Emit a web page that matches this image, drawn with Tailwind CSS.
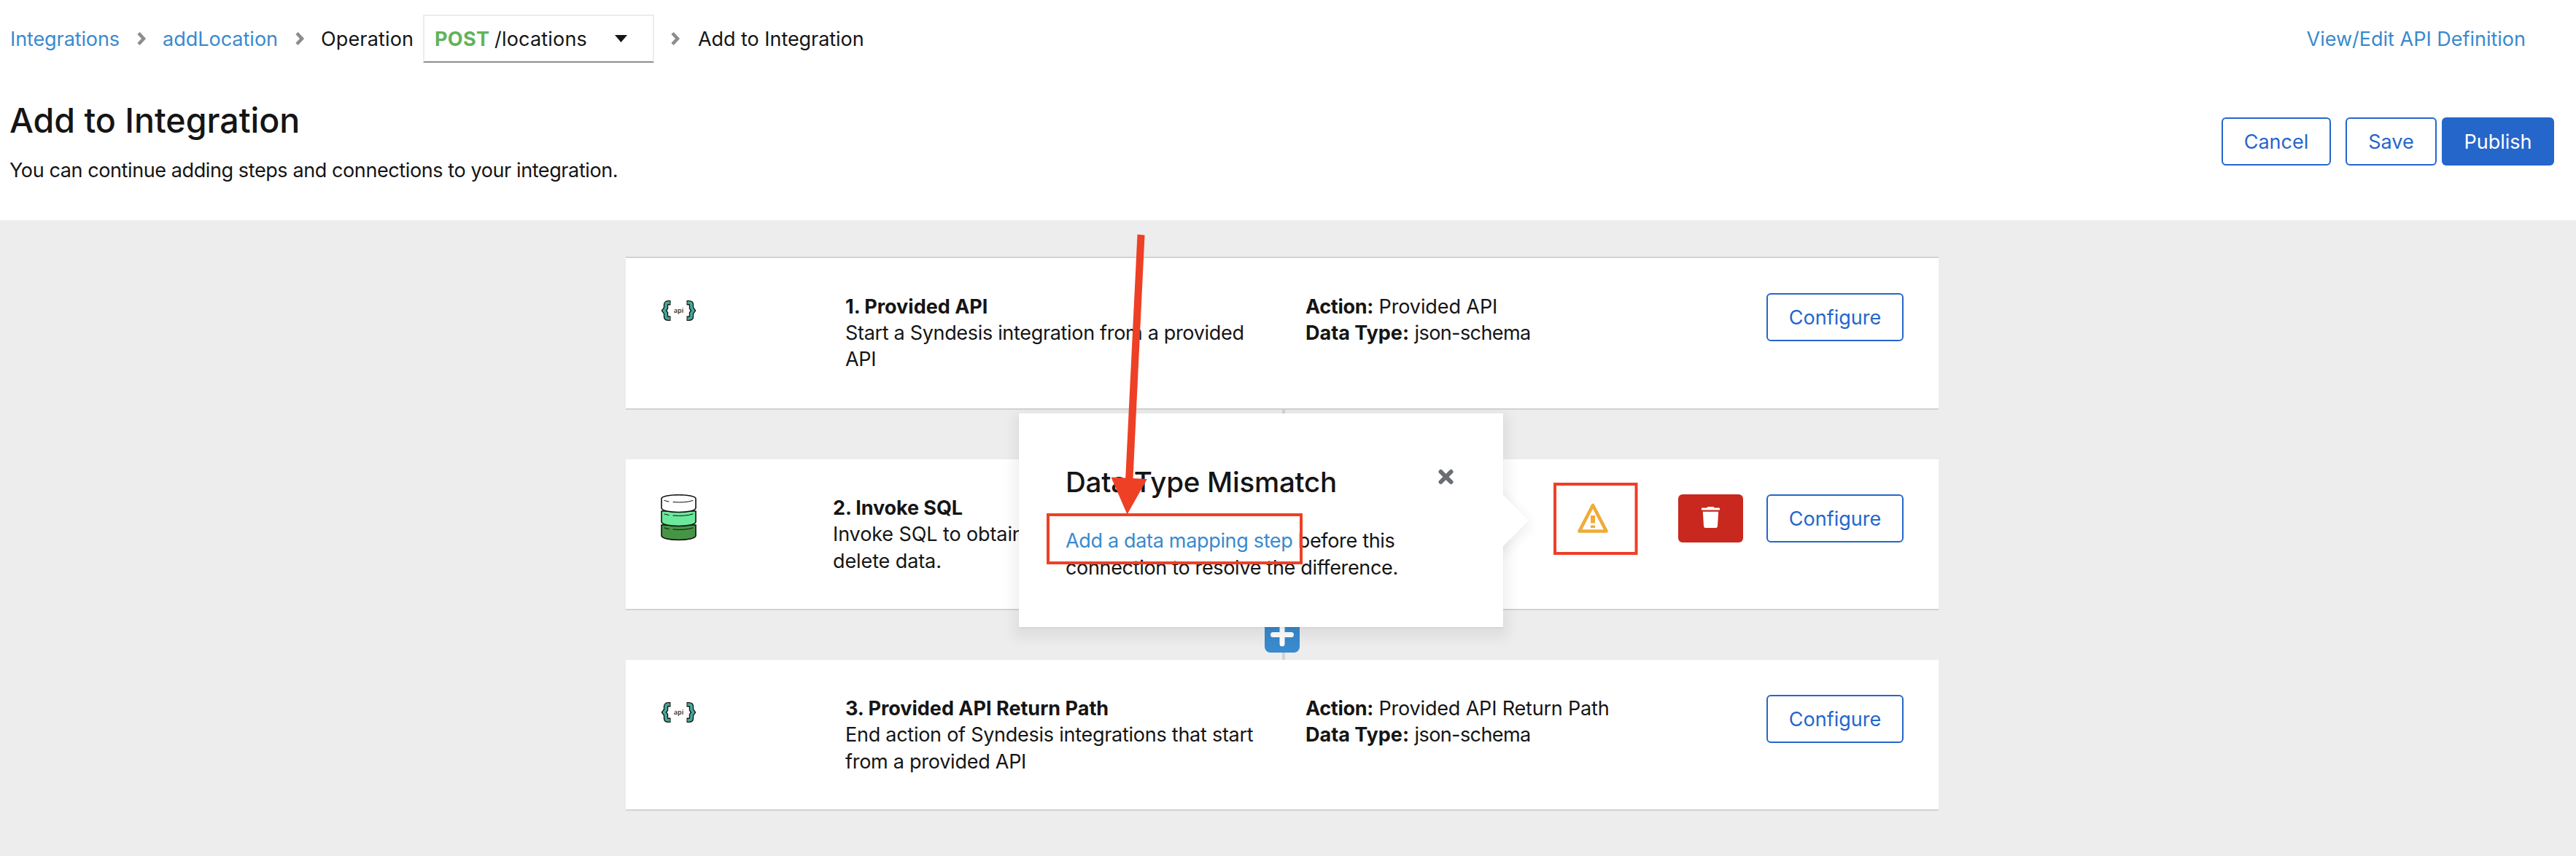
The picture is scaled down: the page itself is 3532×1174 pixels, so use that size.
<!DOCTYPE html>
<html lang="en">
<head>
<meta charset="utf-8">
<title>Add to Integration</title>
<script src="https://cdn.jsdelivr.net/npm/@tailwindcss/browser@4"></script>
</head>
<body class="relative flex h-[1174px] w-[3532px] flex-col overflow-hidden bg-[#ededed] font-['Inter',sans-serif] text-[27px] leading-[36px] text-[#151515]">

<header class="flex h-[302px] shrink-0 flex-col bg-white">
  <nav class="flex items-center pt-5 pl-[14px] pr-[69px] whitespace-nowrap">
    <a class="w-[151px] pt-0.5 tracking-[-0.1px] text-[#398ace]">Integrations</a>
    <svg class="ml-[22px] w-3.5 h-[18px]" viewBox="0 0 14 18" fill="none" stroke="#8a8d90" stroke-width="4.500"><path d="M3 1.5 10 9 3 16.500"/></svg>
    <a class="ml-[22px] w-[160px] pt-0.5 text-[#398ace]">addLocation</a>
    <svg class="ml-[21px] w-3.5 h-[18px]" viewBox="0 0 14 18" fill="none" stroke="#8a8d90" stroke-width="4.500"><path d="M3 1.5 10 9 3 16.500"/></svg>
    <span class="ml-[22px] w-[140px] pt-0.5 tracking-[0.15px]">Operation</span>
    <div class="flex h-[66px] w-[317px] items-center border-2 border-[#ececec] border-b-[#8a8d90] pl-3.5">
      <span class="w-[82px] pt-0.5 font-bold text-[#62b35a] tracking-[0.3px]">POST</span>
      <span class="w-[165px] pt-0.5 tracking-[0.2px]">/locations</span>
      <svg class="h-2.5 w-[17px]" viewBox="0 0 17 10"><path d="M0 0H17L8.500 10Z" fill="#151515"/></svg>
    </div>
    <svg class="ml-[22px] w-3.5 h-[18px]" viewBox="0 0 14 18" fill="none" stroke="#8a8d90" stroke-width="4.500"><path d="M3 1.5 10 9 3 16.500"/></svg>
    <span class="ml-6 pt-0.5 tracking-[-0.05px]">Add to Integration</span>
    <a class="ml-auto pt-0.5 text-[#398ace]">View/Edit API Definition</a>
  </nav>
  <div class="flex justify-between pl-[13px] pr-[30px]">
    <div class="pt-[49px]">
      <h1 class="text-[46.500px] leading-[60px] font-medium">Add to Integration</h1>
      <p class="mt-[21px] whitespace-nowrap tracking-[-0.4px]">You can continue adding steps and connections to your integration.</p>
    </div>
    <div class="flex pt-[75px]">
      <button class="h-[66px] w-[150px] rounded-md border-2 border-[#2566cb] pt-0.5 text-[#2566cb]">Cancel</button>
      <button class="ml-5 h-[66px] w-[125px] rounded-md border-2 border-[#2566cb] pt-0.5 text-[#2566cb]">Save</button>
      <button class="ml-[7px] h-[66px] w-[154px] rounded-md bg-[#2566cb] pt-0.5 text-white">Publish</button>
    </div>
  </div>
</header>

<main class="flex flex-col pt-[50px] pl-[858px]">
  <section class="grid h-[210px] w-[1800px] grid-cols-[253px_631px_1fr_auto] items-start border-y-2 border-[#d2d2d2] bg-white px-12 pt-12">
    <svg class="mt-[9px] h-[30px] w-[50px]" viewBox="0 0 50 30">
      <g fill="none">
        <g stroke="#151515" stroke-width="6.400"><path d="M13.500 4.200H10.500Q7 4.200 7 7V11.500L4.500 15L7 18.500V23Q7 25.800 10.500 25.800H13.500"/><path d="M35.500 4.200H38.500Q42 4.200 42 7V11.500L44.500 15L42 18.500V23Q42 25.800 38.500 25.800H35.500"/></g>
        <g stroke="#47a89a" stroke-width="3.700"><path d="M12.500 4.200H10.500Q7 4.200 7 7V11.500L4.500 15L7 18.500V23Q7 25.800 10.500 25.800H12.500"/><path d="M36.500 4.200H38.500Q42 4.200 42 7V11.500L44.500 15L42 18.500V23Q42 25.800 38.500 25.800H36.500"/></g>
      </g>
      <text x="24.500" y="18" text-anchor="middle" font-family="Noto Sans" font-weight="600" font-size="9" fill="#333">api</text>
    </svg>
    <div class="w-[580px] pt-px"><h2 class="font-bold">1. Provided API</h2><p class="tracking-[-0.32px]">Start a Syndesis integration from a provided API</p></div>
    <div class="whitespace-nowrap pt-px"><p><b class="tracking-[-0.3px]">Action:</b> <span class="tracking-[-0.1px]">Provided API</span></p><p><b>Data Type:</b> <span class="tracking-[-0.6px]">json-schema</span></p></div>
    <button class="h-[66px] w-[188px] rounded-md border-2 border-[#2566cb] pt-0.5 text-[#2566cb]">Configure</button>
  </section>
  <div class="flex h-[68px] w-[1800px] justify-center"><div class="ml-1 w-1 bg-[#d2d2d2]"></div></div>

  <section class="grid h-[207px] w-[1800px] grid-cols-[236px_1fr_auto] items-start border-b-2 border-[#d2d2d2] bg-white px-12 pt-12">
    <svg class="h-[64px] w-[49px]" viewBox="0 0 49 64" stroke="#101010" stroke-width="1.600" stroke-linecap="round" fill="none">
      <path d="M1 42V56.500C1 64.500 48 64.500 48 56.500V42Z" fill="#459545"/>
      <path d="M1 23V37.500C1 45.500 48 45.500 48 37.500V23Z" fill="#6ce89c"/>
      <path d="M1 6C1-1 48-1 48 6V18.500C48 26.500 1 26.500 1 18.500Z" fill="#fff"/>
      <path d="M5 8.500 11 10M17 10.500Q33 12 44 8.500M5 27 11 28.500M17 29Q33 30.500 44 27M5 46 11 47.500M17 48Q33 49.500 44 46" stroke-width="1"/>
    </svg>
    <div class="w-[560px] pt-px"><h2 class="font-bold tracking-[-0.1px]">2. Invoke SQL</h2><p class="leading-[36.500px] tracking-[-0.1px]">Invoke SQL to obtain, store, update, or delete data.</p></div>
    <div class="flex">
      <svg class="mt-3 mr-[96px] h-[42px] w-[42px]" viewBox="0 0 42 42"><path d="M21 3 2.500 38.500H39.500Z" fill="none" stroke="#f0ab37" stroke-width="4.600" stroke-linejoin="round"/><path d="M18 17h6v10.500h-6ZM18 30.500h6v3.500h-6Z" fill="#f0ab37"/></svg>
      <button class="grid h-[66px] w-[89px] place-items-center rounded-md bg-[#c9281e]"><svg class="mb-1 h-[29px] w-[25px]" viewBox="0 0 25 29" fill="#fff"><path d="M8.500 0h8l1 1.500H24q1 0 1 1V4.500H0V2.500q0-1 1-1H7.500ZM1.800 6.800H23.200L22 26.500Q21.800 29 19.500 29H5.500Q3.200 29 3 26.500Z"/></svg></button>
      <button class="ml-8 h-[66px] w-[188px] rounded-md border-2 border-[#2566cb] pt-0.5 text-[#2566cb]">Configure</button>
    </div>
  </section>
  <div class="relative flex h-[68px] w-[1800px] justify-center"><div class="ml-1 w-1 bg-[#d2d2d2]"></div>
    <svg class="absolute top-2.5 left-[876px] h-12 w-12" viewBox="0 0 48 48"><rect width="48" height="48" rx="8" fill="#398ace"/><path d="M24 11V36M11.500 23.500H36.500" stroke="#fff" stroke-width="7" stroke-linecap="round"/></svg>
  </div>

  <section class="grid h-[207px] w-[1800px] grid-cols-[253px_631px_1fr_auto] items-start border-b-2 border-[#d2d2d2] bg-white px-12 pt-12">
    <svg class="mt-[9px] h-[30px] w-[50px]" viewBox="0 0 50 30">
      <g fill="none">
        <g stroke="#151515" stroke-width="6.400"><path d="M13.500 4.200H10.500Q7 4.200 7 7V11.500L4.500 15L7 18.500V23Q7 25.800 10.500 25.800H13.500"/><path d="M35.500 4.200H38.500Q42 4.200 42 7V11.500L44.500 15L42 18.500V23Q42 25.800 38.500 25.800H35.500"/></g>
        <g stroke="#47a89a" stroke-width="3.700"><path d="M12.500 4.200H10.500Q7 4.200 7 7V11.500L4.500 15L7 18.500V23Q7 25.800 10.500 25.800H12.500"/><path d="M36.500 4.200H38.500Q42 4.200 42 7V11.500L44.500 15L42 18.500V23Q42 25.800 38.500 25.800H36.500"/></g>
      </g>
      <text x="24.500" y="18" text-anchor="middle" font-family="Noto Sans" font-weight="600" font-size="9" fill="#333">api</text>
    </svg>
    <div class="w-[580px] pt-px"><h2 class="font-bold">3. Provided API Return Path</h2><p class="leading-[36.500px] tracking-[-0.26px]">End action of Syndesis integrations that start from a provided API</p></div>
    <div class="whitespace-nowrap pt-px"><p><b class="tracking-[-0.3px]">Action:</b> <span class="tracking-[-0.18px]">Provided API Return Path</span></p><p><b>Data Type:</b> <span class="tracking-[-0.6px]">json-schema</span></p></div>
    <button class="h-[66px] w-[188px] rounded-md border-2 border-[#2566cb] pt-0.5 text-[#2566cb]">Configure</button>
  </section>
</main>

<!-- Popover for the type mismatch warning -->
<aside class="absolute top-[567px] left-[1397px] h-[293px] w-[664px] bg-white px-16 pt-[69px] shadow-[0_2px_2px_rgba(3,3,3,0.05),0_8px_16px_8px_rgba(3,3,3,0.06)]">
  <div class="absolute top-[122px] -right-[25px] h-[50px] w-[50px] rotate-45 bg-white shadow-[0_2px_2px_rgba(3,3,3,0.05),0_8px_16px_8px_rgba(3,3,3,0.06)]"></div>
  <div class="absolute inset-0 bg-white"></div>
  <div class="relative">
    <div class="flex justify-between pr-1">
      <h3 class="text-[38.500px] leading-[50px] font-medium tracking-[-0.25px]">Data Type Mismatch</h3>
      <svg class="mt-[7px] h-[22px] w-[21px]" viewBox="0 0 21 22"><path d="M3.500 4 17.500 18M17.500 4 3.500 18" stroke="#6a6e73" stroke-width="6" stroke-linecap="round"/></svg>
    </div>
    <p class="mt-[38px] whitespace-nowrap leading-[36.500px] tracking-[-0.33px]"><a class="text-[#398ace]">Add a data mapping step</a> before this<br>connection to resolve the difference.</p>
  </div>
</aside>

<!-- Callout arrow and frames -->
<svg class="absolute inset-0 h-full w-full" viewBox="0 0 3532 1174">
  <path d="M1559.500 321.500 1569.500 322.500 1553.500 656 1572.800 657 1545.500 705.500 1523.500 654.500 1543.200 655.500Z" fill="#ee4025"/>
  <rect x="1437" y="706" width="347" height="66" fill="none" stroke="#ee4025" stroke-width="4"/>
  <rect x="2132" y="664" width="111.500" height="95" fill="none" stroke="#ee4025" stroke-width="4"/>
</svg>
</body>
</html>
